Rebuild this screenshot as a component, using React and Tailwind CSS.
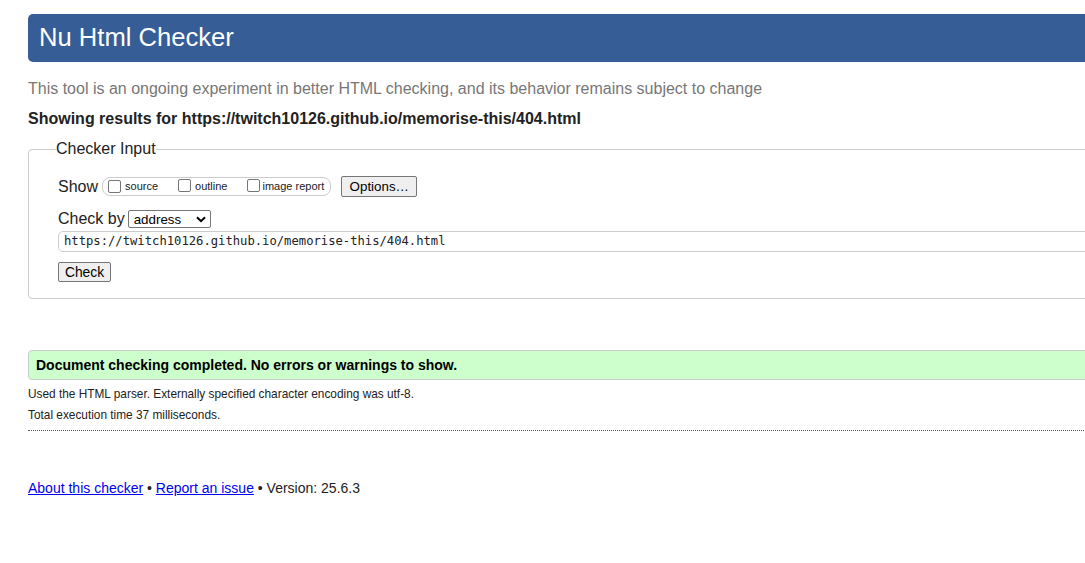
import React from 'react'

function Box() {
  return <span className="inline-block w-[13px] h-[13px] border border-[#767676] rounded-[2px] bg-white shrink-0" />
}

function ShowOptions() {
  return (
    <div className="flex items-center h-[19px] ml-[4px] pl-[5px] pr-[6px] border border-[#ccc] rounded-[8px] text-[11px] leading-[13px]">
      <Box />
      <span className="ml-[4px]">source</span>
      <span className="ml-[20px]"><Box /></span>
      <span className="ml-[4px]">outline</span>
      <span className="ml-[20px]"><Box /></span>
      <span className="ml-[2px]">image report</span>
    </div>
  )
}

export default function App() {
  return (
    <div className="w-full min-h-screen overflow-hidden bg-white text-[#222] font-['Liberation_Sans',Arial,sans-serif]">
      <div className="w-[1300px] pl-[28px] pt-[14px]">
        <h1 className="h-[48px] bg-[#365d95] rounded-[5px] pl-[11px] pt-[9px] text-white text-[25.6px] leading-[29px] font-normal">
          Nu Html Checker
        </h1>

        <p className="mt-[18px] text-[16px] leading-[18px] text-[#777]">
          This tool is an ongoing experiment in better HTML checking, and its behavior remains subject to change
        </p>
        <p className="mt-[12px] text-[16px] leading-[18px] font-bold">
          Showing results for https://twitch10126.github.io/memorise-this/404.html
        </p>

        <fieldset className="mt-[12px] border border-[#ccc] rounded-[4px] pl-[29px] pt-[18px] pb-[16px]">
          <legend className="-ml-[2px] text-[16px] leading-[18px]">Checker Input</legend>

          <div className="flex items-center h-[21px]">
            <span className="text-[16px] leading-[18px]">Show</span>
            <ShowOptions />
            <button className="ml-[10px] w-[76px] h-[21px] bg-[#efefef] border border-[#767676] rounded-[2px] text-[13.33px] leading-[15px] text-black">
              Options…
            </button>
          </div>

          <div className="flex items-center h-[18px] mt-[13px]">
            <span className="text-[16px] leading-[18px]">Check by</span>
            <div className="ml-[3px] w-[83px] h-[18px] flex items-center justify-between pl-[5px] pr-[4px] border border-[#767676] rounded-[2px] bg-white text-[13.33px] leading-[15px] text-black">
              <span>address</span>
              <svg width="10" height="7" viewBox="0 0 10 7">
                <path d="M1 1.2 L5 5.2 L9 1.2" fill="none" stroke="#000" strokeWidth="2" />
              </svg>
            </div>
          </div>

          <div className="mt-[3px] h-[21px] flex items-center pl-[5px] border border-[#ccc] rounded-[5px] font-['DejaVu_Sans_Mono',monospace] text-[12.2px] leading-[15px]">
            https://twitch10126.github.io/memorise-this/404.html
          </div>

          <button className="mt-[10px] block w-[53px] h-[20px] bg-[#efefef] border border-[#767676] rounded-[2px] text-[13.8px] leading-[15px] text-black">
            Check
          </button>
        </fieldset>

        <div className="mt-[51px] h-[30px] flex items-center pl-[7px] bg-[#ccffcc] border border-[#ccc] rounded-[4px] text-[14px] leading-[16px] font-bold text-black">
          Document checking completed. No errors or warnings to show.
        </div>

        <p className="mt-[7px] text-[11.85px] leading-[14px]">
          Used the HTML parser. Externally specified character encoding was utf-8.
        </p>
        <p className="mt-[7px] text-[11.85px] leading-[14px]">Total execution time 37 milliseconds.</p>
        <div className="mt-[8px] border-t border-dotted border-[#555]" />

        <p className="mt-[49px] text-[14px] leading-[16px]">
          <a href="#" className="text-[#0000ee] underline">About this checker</a>
          {' • '}
          <a href="#" className="text-[#0000ee] underline">Report an issue</a>
          {' • Version: 25.6.3'}
        </p>
      </div>
    </div>
  )
}
